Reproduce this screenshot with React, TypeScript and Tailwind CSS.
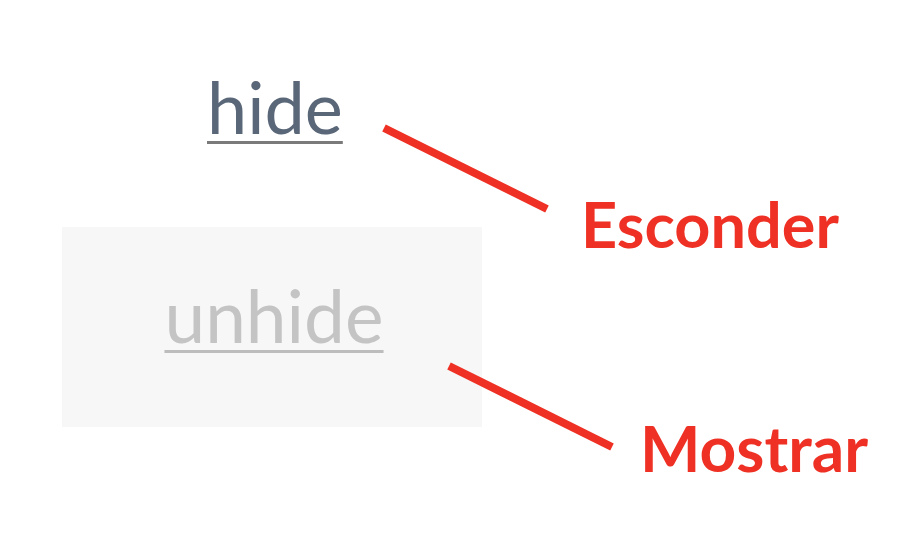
export default function App() {
  return (
    <div className="relative w-[922px] h-[540px] overflow-hidden bg-white font-['Lato',sans-serif]">
      <div className="pt-[70px] pl-[207px] text-[72px] leading-none text-[#5a6779]">
        <span className="underline decoration-[#7a7a7a] decoration-[3px] underline-offset-[7px]">hide</span>
      </div>

      <div className="mt-[85px] ml-[62px] flex h-[200px] w-[420px] items-center justify-center bg-[#f7f7f7] pb-[24px] pl-[4px]">
        <span className="text-[73px] leading-none text-[#c4c4c4] underline decoration-[#bdbdbd] decoration-[3px] underline-offset-[7px]">
          unhide
        </span>
      </div>

      <svg className="absolute left-0 top-0" width="922" height="540" viewBox="0 0 922 540">
        <line x1="384" y1="128" x2="547" y2="209" stroke="#ee3124" strokeWidth="8" />
        <line x1="449" y1="366" x2="612" y2="447" stroke="#ee3124" strokeWidth="8" />
      </svg>

      <div className="absolute left-[581px] top-[192px] text-[63px] font-bold leading-none text-[#ee3124]">
        Esconder
      </div>
      <div className="absolute left-[640px] top-[416px] text-[64px] font-bold leading-none text-[#ee3124]">
        Mostrar
      </div>
    </div>
  );
}
